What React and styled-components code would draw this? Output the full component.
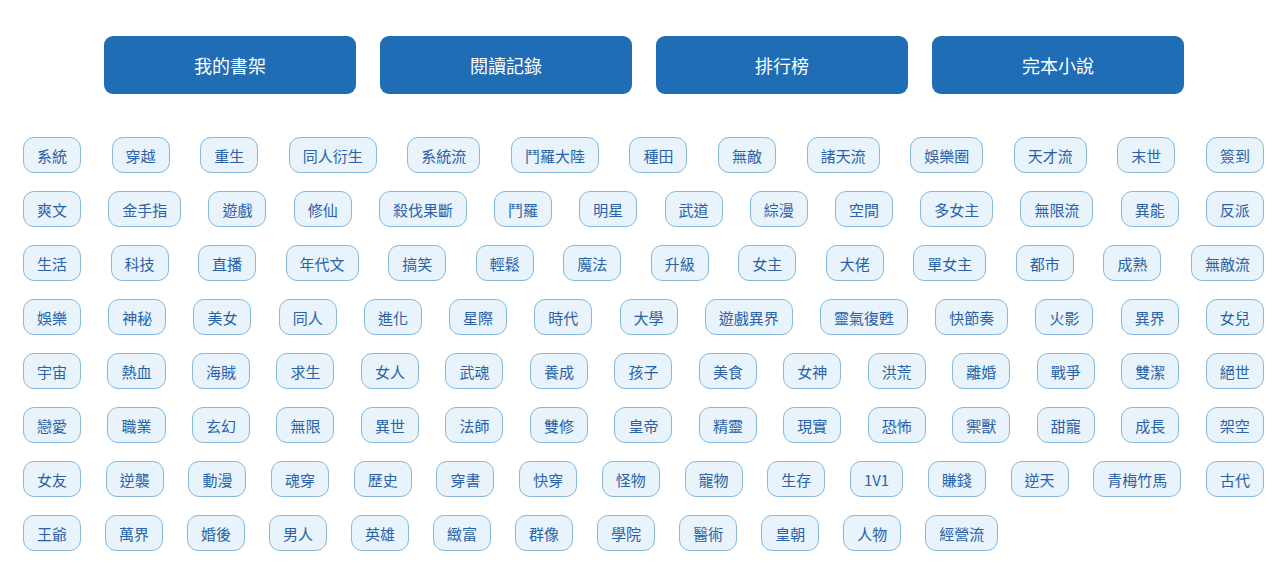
import React from "react";
import styled, { createGlobalStyle } from "styled-components";

const GlobalStyle = createGlobalStyle`
  html, body { margin: 0; padding: 0; background: #ffffff; }
  body { font-family: "Noto Sans CJK TC", "Noto Sans", sans-serif; }
  * { box-sizing: border-box; }
`;

const Page = styled.div`
  width: 1280px;
  padding: 36px 16px 0 23px;
`;

const NavBar = styled.nav`
  display: flex;
  justify-content: center;
  gap: 24px;
  padding-left: 9px;
  padding-right: 8px;
`;

const NavButton = styled.a`
  width: 252px;
  height: 58px;
  display: flex;
  align-items: center;
  justify-content: center;
  background: #1f6db4;
  color: #ffffff;
  border-radius: 9px;
  font-size: 18px;
  text-decoration: none;
  cursor: pointer;
`;

const TagList = styled.div`
  margin-top: 43px;
  width: 1241px;
  display: flex;
  flex-direction: column;
  gap: 18px;
`;

const TagRow = styled.div`
  display: flex;
  justify-content: ${(p) => (p.$last ? "flex-start" : "space-between")};
  gap: ${(p) => (p.$last ? "24px" : "0")};
`;

const Tag = styled.a`
  height: 36px;
  padding: 0 13px;
  display: inline-flex;
  align-items: center;
  justify-content: center;
  border: 1px solid #88b9d8;
  border-radius: 11px;
  background: #e8f3fc;
  color: #2a62a6;
  font-size: 15px;
  white-space: nowrap;
  cursor: pointer;
`;

const navItems = ["我的書架", "閱讀記錄", "排行榜", "完本小說"];

const rows = [
  ["系統", "穿越", "重生", "同人衍生", "系統流", "鬥羅大陸", "種田", "無敵", "諸天流", "娛樂圈", "天才流", "末世", "簽到"],
  ["爽文", "金手指", "遊戲", "修仙", "殺伐果斷", "鬥羅", "明星", "武道", "綜漫", "空間", "多女主", "無限流", "異能", "反派"],
  ["生活", "科技", "直播", "年代文", "搞笑", "輕鬆", "魔法", "升級", "女主", "大佬", "單女主", "都市", "成熟", "無敵流"],
  ["娛樂", "神秘", "美女", "同人", "進化", "星際", "時代", "大學", "遊戲異界", "靈氣復甦", "快節奏", "火影", "異界", "女兒"],
  ["宇宙", "熱血", "海賊", "求生", "女人", "武魂", "養成", "孩子", "美食", "女神", "洪荒", "離婚", "戰爭", "雙潔", "絕世"],
  ["戀愛", "職業", "玄幻", "無限", "異世", "法師", "雙修", "皇帝", "精靈", "現實", "恐怖", "禦獸", "甜寵", "成長", "架空"],
  ["女友", "逆襲", "動漫", "魂穿", "歷史", "穿書", "快穿", "怪物", "寵物", "生存", "1V1", "賺錢", "逆天", "青梅竹馬", "古代"],
  ["王爺", "萬界", "婚後", "男人", "英雄", "緻富", "群像", "學院", "醫術", "皇朝", "人物", "經營流"],
];

export default function App() {
  return (
    <>
      <GlobalStyle />
      <Page>
        <NavBar>
          {navItems.map((n) => (
            <NavButton key={n}>{n}</NavButton>
          ))}
        </NavBar>
        <TagList>
          {rows.map((row, i) => (
            <TagRow key={i} $last={i === rows.length - 1}>
              {row.map((t) => (
                <Tag key={t}>{t}</Tag>
              ))}
            </TagRow>
          ))}
        </TagList>
      </Page>
    </>
  );
}
